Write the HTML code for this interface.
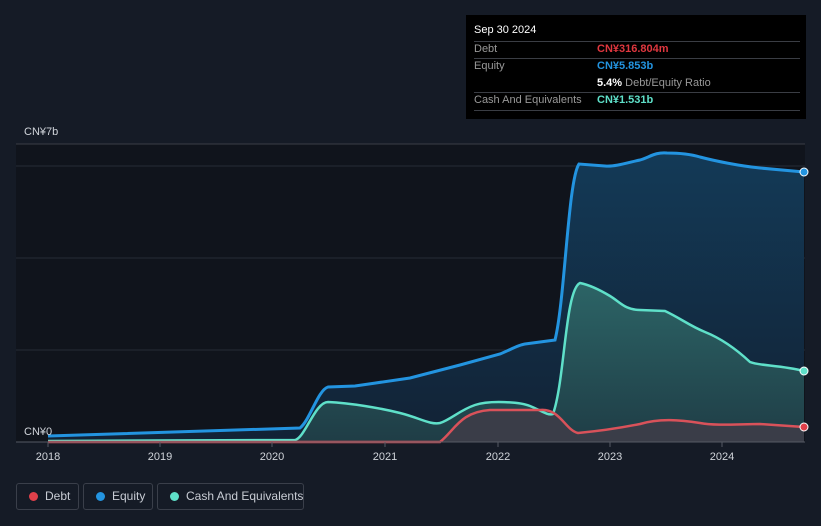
<!DOCTYPE html><html><head><style>
html,body{margin:0;width:821px;height:526px;overflow:hidden}
body{background:#151b26;font-family:"Liberation Sans",sans-serif;position:relative}
.tt{position:absolute;left:466px;top:15px;width:340px;height:104px;background:#000;}
.tt .h{position:absolute;left:8px;top:9px;color:#fff;font-size:11px}
.row{position:absolute;left:8px;width:326px;font-size:11px;color:#999;white-space:nowrap}
.line{position:absolute;left:8px;width:326px;height:1px;background:#3a3d44}
.v{position:absolute;left:123px;font-weight:bold}
.lg{position:absolute;top:483px;height:27px;border:1px solid #3a3f4a;border-radius:3px;color:#c8ccd4;font-size:12px;line-height:25px;box-sizing:border-box;white-space:nowrap}
.lg i{position:absolute;left:12px;top:8px;width:9px;height:9px;border-radius:50%}
</style></head><body>
<svg width="821" height="526" style="position:absolute;left:0;top:0">
<defs>
<linearGradient id="ge" x1="0" y1="0" x2="0" y2="1"><stop offset="0" stop-color="#133a57"/><stop offset="1" stop-color="#122235"/></linearGradient>
<linearGradient id="gc" x1="0" y1="0" x2="0" y2="1"><stop offset="0" stop-color="#2c6466"/><stop offset="1" stop-color="#1f3d46"/></linearGradient>
</defs>
<rect x="16" y="144" width="789" height="298" fill="#10141c"/>
<line x1="16" y1="144" x2="805" y2="144" stroke="#3a3e46"/>
<line x1="16" y1="166" x2="805" y2="166" stroke="#262c36"/>
<line x1="16" y1="258" x2="805" y2="258" stroke="#262c36"/>
<line x1="16" y1="350" x2="805" y2="350" stroke="#262c36"/>
<path d="M48,436 L300,428 C310,420 318,390 328,387 L355,386 L410,378 L460,365 L500,354 C510,350 518,345 525,344 L555,340 C565,300 568,180 579,164 L605,166 C615,167 630,162 640,160 C650,157 655,152 667,153 C680,153 690,154 700,157 C715,161 740,166 760,168 L804,172 L804,442 L48,442Z" fill="url(#ge)"/>
<path d="M48,441 L295,440 C305,438 315,402 328,402 C350,403 380,408 400,413 C420,418 430,425 440,423 C450,420 460,410 475,405 C490,400 520,402 530,406 C540,410 548,416 553,414 C565,380 565,290 580,283 C590,285 600,290 610,296 C620,302 625,310 640,310 L665,311 C680,318 690,326 705,332 C720,338 735,348 750,362 C760,366 780,365 804,371 L804,442 L48,442Z" fill="url(#gc)"/>
<path d="M48,442 L440,442 C455,430 460,412 490,410 L540,410 C560,408 565,430 578,433 C600,431 620,428 640,424 C660,418 680,420 700,423 C715,426 740,424 760,424 L804,427 L804,442Z" fill="#3a3d48"/>
<path d="M48,436 L300,428 C310,420 318,390 328,387 L355,386 L410,378 L460,365 L500,354 C510,350 518,345 525,344 L555,340 C565,300 568,180 579,164 L605,166 C615,167 630,162 640,160 C650,157 655,152 667,153 C680,153 690,154 700,157 C715,161 740,166 760,168 L804,172" fill="none" stroke="#2394e0" stroke-width="3"/>
<path d="M48,441 L295,440 C305,438 315,402 328,402 C350,403 380,408 400,413 C420,418 430,425 440,423 C450,420 460,410 475,405 C490,400 520,402 530,406 C540,410 548,416 553,414 C565,380 565,290 580,283 C590,285 600,290 610,296 C620,302 625,310 640,310 L665,311 C680,318 690,326 705,332 C720,338 735,348 750,362 C760,366 780,365 804,371" fill="none" stroke="#5fe0c9" stroke-width="2.5"/>
<path d="M48,442 L440,442 C455,430 460,412 490,410 L540,410 C560,408 565,430 578,433 C600,431 620,428 640,424 C660,418 680,420 700,423 C715,426 740,424 760,424 L804,427" fill="none" stroke="#d9525a" stroke-width="2.5"/>
<line x1="16" y1="442" x2="805" y2="442" stroke="#555a64"/>
<circle cx="804" cy="172" r="4" fill="#2394e0" stroke="#fff" stroke-width="1"/>
<circle cx="804" cy="371" r="4" fill="#5fe0c9" stroke="#fff" stroke-width="1"/>
<circle cx="804" cy="427" r="4" fill="#e0404a" stroke="#fff" stroke-width="1"/>
<g fill="#d0d4da" font-size="11" font-family="Liberation Sans">
<text x="24" y="135">CN¥7b</text><text x="24" y="435">CN¥0</text>
<g text-anchor="middle"><text x="48" y="460">2018</text><text x="160" y="460">2019</text><text x="272" y="460">2020</text><text x="385" y="460">2021</text><text x="498" y="460">2022</text><text x="610" y="460">2023</text><text x="722" y="460">2024</text></g>
</g>
<g stroke="#555a64"><line x1="48" y1="442" x2="48" y2="447"/><line x1="160" y1="442" x2="160" y2="447"/><line x1="272" y1="442" x2="272" y2="447"/><line x1="385" y1="442" x2="385" y2="447"/><line x1="498" y1="442" x2="498" y2="447"/><line x1="610" y1="442" x2="610" y2="447"/><line x1="722" y1="442" x2="722" y2="447"/></g>
</svg>
<div class="tt">
<div class="h">Sep 30 2024</div>
<div class="line" style="top:26px"></div>
<div class="row" style="top:28px">Debt<span class="v" style="color:#e0373f">CN¥316.804m</span></div>
<div class="line" style="top:43px"></div>
<div class="row" style="top:45px">Equity<span class="v" style="color:#2394e0">CN¥5.853b</span></div>
<div class="row" style="top:62px"><span class="v" style="color:#fff">5.4% <span style="color:#999;font-weight:normal">Debt/Equity Ratio</span></span></div>
<div class="line" style="top:77px"></div>
<div class="row" style="top:79px">Cash And Equivalents<span class="v" style="color:#5fe0c9">CN¥1.531b</span></div>
<div class="line" style="top:95px"></div>
</div>
<div class="lg" style="left:16px;width:63px"><i style="background:#e0404a"></i><span style="position:absolute;left:28px">Debt</span></div>
<div class="lg" style="left:83px;width:70px"><i style="background:#2394e0"></i><span style="position:absolute;left:28px">Equity</span></div>
<div class="lg" style="left:157px;width:147px"><i style="background:#5fe0c9"></i><span style="position:absolute;left:28px">Cash And Equivalents</span></div>
</body></html>
